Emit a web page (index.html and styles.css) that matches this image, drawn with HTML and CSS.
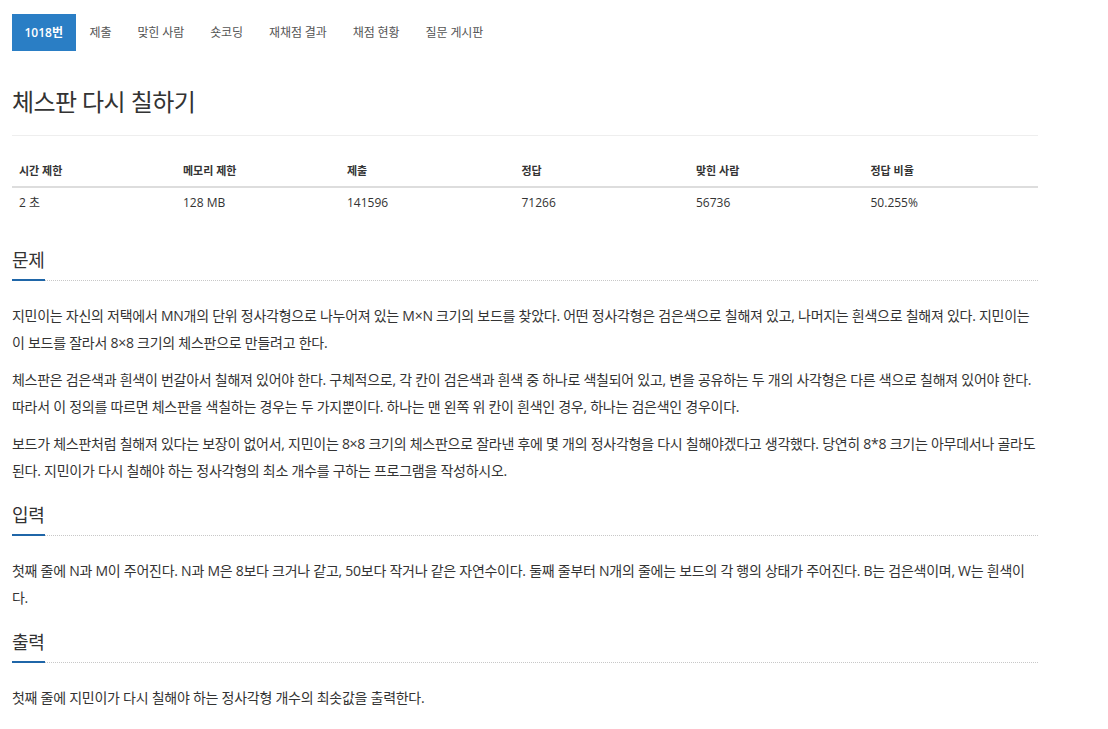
FILE: index.html
```html
<!DOCTYPE html>
<html lang="ko">
<head>
<meta charset="utf-8">
<title>체스판 다시 칠하기</title>
<link rel="stylesheet" href="styles.css">
</head>
<body>
<div class="container">
  <ul class="tabs">
    <li class="tab active">1018번</li>
    <li class="tab">제출</li>
    <li class="tab">맞힌 사람</li>
    <li class="tab">숏코딩</li>
    <li class="tab">재채점 결과</li>
    <li class="tab">채점 현황</li>
    <li class="tab">질문 게시판</li>
  </ul>

  <div class="page-header">
    <h1 class="title">체스판 다시 칠하기</h1>
  </div>

  <table class="info">
    <colgroup>
      <col class="col-narrow">
      <col class="col-narrow">
      <col class="col-wide">
      <col class="col-wide">
      <col class="col-wide">
      <col class="col-wide">
    </colgroup>
    <thead>
      <tr>
        <th>시간 제한</th>
        <th>메모리 제한</th>
        <th>제출</th>
        <th>정답</th>
        <th>맞힌 사람</th>
        <th>정답 비율</th>
      </tr>
    </thead>
    <tbody>
      <tr>
        <td>2 초</td>
        <td>128 MB</td>
        <td>141596</td>
        <td>71266</td>
        <td>56736</td>
        <td>50.255%</td>
      </tr>
    </tbody>
  </table>

  <section class="problem-section">
    <div class="headline"><h2>문제</h2></div>
    <p>지민이는 자신의 저택에서 MN개의 단위 정사각형으로 나누어져 있는 M×N 크기의 보드를 찾았다. 어떤 정사각형은 검은색으로 칠해져 있고, 나머지는 흰색으로 칠해져 있다. 지민이는 이 보드를 잘라서 8×8 크기의 체스판으로 만들려고 한다.</p>
    <p>체스판은 검은색과 흰색이 번갈아서 칠해져 있어야 한다. 구체적으로, 각 칸이 검은색과 흰색 중 하나로 색칠되어 있고, 변을 공유하는 두 개의 사각형은 다른 색으로 칠해져 있어야 한다. 따라서 이 정의를 따르면 체스판을 색칠하는 경우는 두 가지뿐이다. 하나는 맨 왼쪽 위 칸이 흰색인 경우, 하나는 검은색인 경우이다.</p>
    <p>보드가 체스판처럼 칠해져 있다는 보장이 없어서, 지민이는 8×8 크기의 체스판으로 잘라낸 후에 몇 개의 정사각형을 다시 칠해야겠다고 생각했다. 당연히 8*8 크기는 아무데서나 골라도 된다. 지민이가 다시 칠해야 하는 정사각형의 최소 개수를 구하는 프로그램을 작성하시오.</p>
  </section>

  <section class="problem-section">
    <div class="headline"><h2>입력</h2></div>
    <p>첫째 줄에 N과 M이 주어진다. N과 M은 8보다 크거나 같고, 50보다 작거나 같은 자연수이다. 둘째 줄부터 N개의 줄에는 보드의 각 행의 상태가 주어진다. B는 검은색이며, W는 흰색이다.</p>
  </section>

  <section class="problem-section">
    <div class="headline"><h2>출력</h2></div>
    <p>첫째 줄에 지민이가 다시 칠해야 하는 정사각형 개수의 최솟값을 출력한다.</p>
  </section>
</div>
</body>
</html>
```

FILE: styles.css
```css
html, body {
  margin: 0;
  padding: 0;
  background: #fff;
}

body {
  font-family: "Open Sans", "Noto Sans CJK KR", sans-serif;
  color: #333;
  font-size: 14px;
}

.container {
  width: 1026px;
  padding: 14px 12px 0;
}

.tabs {
  list-style: none;
  margin: 0;
  padding: 0;
  display: flex;
  gap: 2px;
}

.tab {
  font-size: 12px;
  line-height: 17px;
  padding: 10px 12px;
  color: #555;
  letter-spacing: -0.1px;
}

.tab.active {
  background: #2a7ec5;
  color: #fff;
  font-weight: 600;
  padding: 10px 12.5px;
  letter-spacing: 0;
}

.page-header {
  margin-top: 38px;
  padding-bottom: 20px;
  border-bottom: 1px solid #eee;
  margin-bottom: 18px;
}

.title {
  margin: 0;
  font-size: 24px;
  line-height: 26px;
  font-weight: 400;
  color: #333;
  letter-spacing: -0.6px;
}

.info {
  width: 1026px;
  border-collapse: collapse;
  table-layout: fixed;
  margin-bottom: 29px;
}

.col-narrow {
  width: 164px;
}

.col-wide {
  width: 174.5px;
}

.info th {
  text-align: left;
  font-size: 11px;
  font-weight: 700;
  line-height: 17px;
  padding: 8px 7px 7px;
  border-bottom: 2px solid #ddd;
}

.info td {
  font-size: 12px;
  line-height: 17px;
  padding: 6px 7px;
}

.headline {
  margin-top: 17px;
  border-bottom: 1px dotted #c8c8c8;
  margin-bottom: 21px;
}

.headline h2 {
  display: inline-block;
  margin: 0 0 -1px;
  font-size: 18px;
  line-height: 28px;
  font-weight: 400;
  padding-bottom: 5px;
  border-bottom: 2px solid #1f66a8;
  letter-spacing: -0.3px;
}

.problem-section p {
  margin: 0 0 10px;
  font-size: 14px;
  line-height: 27px;
  letter-spacing: -0.26px;
}
```
